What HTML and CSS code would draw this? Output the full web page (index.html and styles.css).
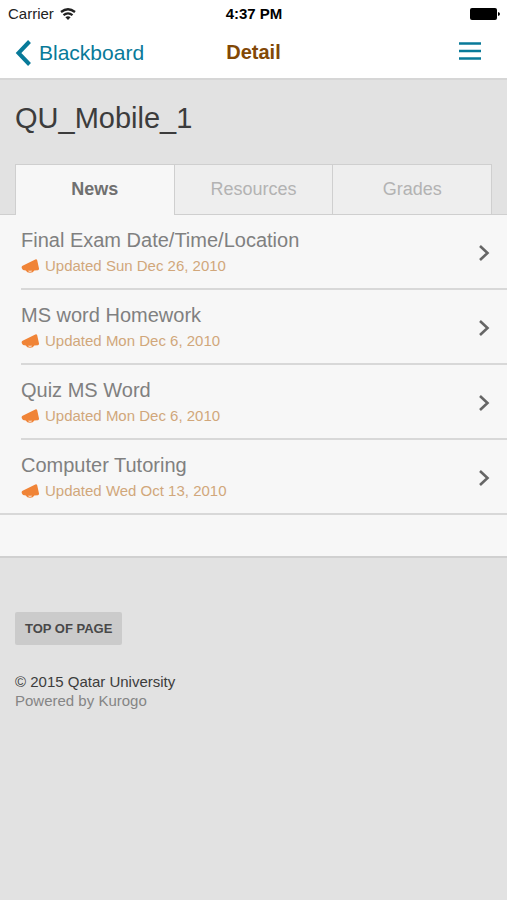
FILE: index.html
```html
<!DOCTYPE html>
<html lang="en">
<head>
<meta charset="utf-8">
<meta name="viewport" content="width=device-width, initial-scale=1">
<title>Detail</title>
<link rel="stylesheet" href="styles.css">
</head>
<body>
<svg class="defs" aria-hidden="true">
  <symbol id="horn" viewBox="0 0 18 14">
    <path d="M14.300.4Q15.700-.100 16.200 1.200L18 9.500Q18.100 11 16.900 11.200L13.300 11.600Q12.300 13.800 9 13.800 5.800 13.700 4.800 11.400L2 11Q.500 9.500.600 8.200.800 7.200 1.600 6.800ZM7 11.800Q7.700 12.700 9 12.700 10.600 12.700 11.200 11.800Z"/>
  </symbol>
  <symbol id="chevron" viewBox="0 0 12 18">
    <path d="M2 2 9.500 9 2 16" fill="none" stroke="currentColor" stroke-width="2.600"/>
  </symbol>
</svg>
<div class="status">
  <span class="carrier">Carrier
    <svg class="wifi" viewBox="0 0 16 12" aria-hidden="true">
      <g fill="none" stroke="currentColor" stroke-width="2.300"><path d="M1 4Q8-1.600 15 4"/><path d="M3.500 7.200Q8 3.600 12.500 7.200"/></g>
      <path d="M5.400 9.200Q8 7.200 10.600 9.200L8 12Z"/>
    </svg>
  </span>
  <time class="clock">4:37 PM</time>
  <svg class="battery" viewBox="0 0 30 12" aria-hidden="true"><rect width="27" height="12" rx="2"/><path d="M28 4Q30 4.500 30 6T28 8Z"/></svg>
</div>
<header class="navbar">
  <a class="back" href="#">
    <svg class="back-icon" viewBox="0 0 16 26" aria-hidden="true"><path d="M14.500 1.500 3.500 13 14.500 24.500" fill="none" stroke="currentColor" stroke-width="4"/></svg>
    Blackboard
  </a>
  <h1 class="heading">Detail</h1>
  <button class="menu" type="button" aria-label="Menu">
    <svg class="menu-icon" viewBox="0 0 22 18" aria-hidden="true"><path d="M0 1.500H22M0 9H22M0 16.500H22" stroke="currentColor" stroke-width="2.600"/></svg>
  </button>
</header>
<main>
  <h2 class="course">QU_Mobile_1</h2>
  <nav class="tabs">
    <a class="tab active" href="#">News</a>
    <a class="tab" href="#">Resources</a>
    <a class="tab" href="#">Grades</a>
  </nav>
  <div class="panel">
    <ul class="list">
      <li><a class="item" href="#"><span class="item-title">Final Exam Date/Time/Location</span><span class="item-date"><svg class="horn"><use href="#horn"/></svg>Updated Sun Dec 26, 2010</span><svg class="chevron"><use href="#chevron"/></svg></a></li>
      <li><a class="item" href="#"><span class="item-title">MS word Homework</span><span class="item-date"><svg class="horn"><use href="#horn"/></svg>Updated Mon Dec 6, 2010</span><svg class="chevron"><use href="#chevron"/></svg></a></li>
      <li><a class="item" href="#"><span class="item-title">Quiz MS Word</span><span class="item-date"><svg class="horn"><use href="#horn"/></svg>Updated Mon Dec 6, 2010</span><svg class="chevron"><use href="#chevron"/></svg></a></li>
      <li><a class="item" href="#"><span class="item-title">Computer Tutoring</span><span class="item-date"><svg class="horn"><use href="#horn"/></svg>Updated Wed Oct 13, 2010</span><svg class="chevron"><use href="#chevron"/></svg></a></li>
    </ul>
  </div>
</main>
<footer class="footer">
  <a class="top" href="#">TOP OF PAGE</a>
  <p class="copyright">© 2015 Qatar University</p>
  <p class="powered">Powered by Kurogo</p>
</footer>
</body>
</html>
```
FILE: styles.css
```css
* {
  box-sizing: border-box;
}

body {
  margin: 0;
  background: #e2e2e2;
  color: #3c3c3c;
  font-family: "Liberation Sans", Arial, sans-serif;
}

a {
  color: inherit;
  text-decoration: none;
}

h1, h2, p, ul {
  margin: 0;
  padding: 0;
}

.defs {
  display: none;
}

.status, .navbar {
  display: grid;
  grid-template-columns: 1fr auto 1fr;
  align-items: center;
  background: #fff;
}

.status {
  height: 27px;
  padding: 0 7px 0 8px;
  color: #000;
  font-size: 15px;
}

.carrier {
  display: flex;
  align-items: center;
  gap: 6px;
  color: #222;
}

.wifi {
  width: 16px;
  height: 12px;
  fill: currentColor;
}

.clock {
  font-weight: bold;
}

.battery {
  justify-self: end;
  width: 30px;
  height: 12px;
}

.navbar {
  height: 53px;
  padding: 0 26px 0 15px;
  border-bottom: 2px solid #d6d6d6;
  color: #087a99;
}

.back {
  display: flex;
  align-items: center;
  gap: 8px;
  font-size: 21px;
}

.back-icon {
  width: 16px;
  height: 26px;
}

.heading {
  margin-left: 11px;
  color: #824806;
  font-size: 20px;
}

.menu {
  justify-self: end;
  padding: 0 0 3px;
  border: 0;
  background: none;
  color: inherit;
}

.menu-icon {
  display: block;
  width: 22px;
  height: 18px;
}

.course {
  padding: 20px 15px 28px;
  font-size: 29px;
  font-weight: normal;
  line-height: 36px;
}

.tabs {
  position: relative;
  display: flex;
  margin: 0 15px;
  border: 1px solid #cfcfcf;
  border-bottom: 0;
}

.tab {
  flex: 1;
  height: 50px;
  background: #eee;
  border-bottom: 1px solid #cfcfcf;
  color: #b3b3b3;
  font-size: 18px;
  line-height: 48px;
  text-align: center;
}

.tab + .tab {
  border-left: 1px solid #cfcfcf;
}

.tab.active {
  background: #f7f7f7;
  border-bottom-color: #f7f7f7;
  color: #707070;
  font-weight: bold;
}

.panel {
  margin-top: -1px;
  padding-bottom: 41px;
  background: #f7f7f7;
  border-top: 1px solid #cfcfcf;
  border-bottom: 2px solid #d0d0d0;
}

.list {
  list-style: none;
}

.item {
  display: grid;
  grid-template-columns: 1fr 12px;
  align-items: center;
  height: 75px;
  margin-left: 21px;
  padding: 13px 17px 10px 0;
  border-bottom: 2px solid #d8d8d8;
}

li:last-child .item {
  margin-left: 0;
  padding-left: 21px;
}

.item-title {
  color: #808080;
  font-size: 20px;
  line-height: 25px;
}

.item-date {
  display: flex;
  grid-row: 2;
  align-items: center;
  gap: 6px;
  color: #d1a77b;
  font-size: 15px;
  line-height: 25px;
}

.horn {
  width: 18px;
  height: 14px;
  fill: #f08437;
}

.chevron {
  grid-column: 2;
  grid-row: 1 / 3;
  width: 12px;
  height: 18px;
  color: #666;
}

.footer {
  padding: 54px 15px;
  font-size: 15px;
  line-height: 19px;
}

.top {
  display: inline-block;
  margin-bottom: 27px;
  padding: 0 10px;
  border-radius: 2px;
  background: #cbcbcb;
  color: #484848;
  font-size: 13px;
  font-weight: bold;
  line-height: 33px;
}

.powered {
  color: #858585;
}
```
